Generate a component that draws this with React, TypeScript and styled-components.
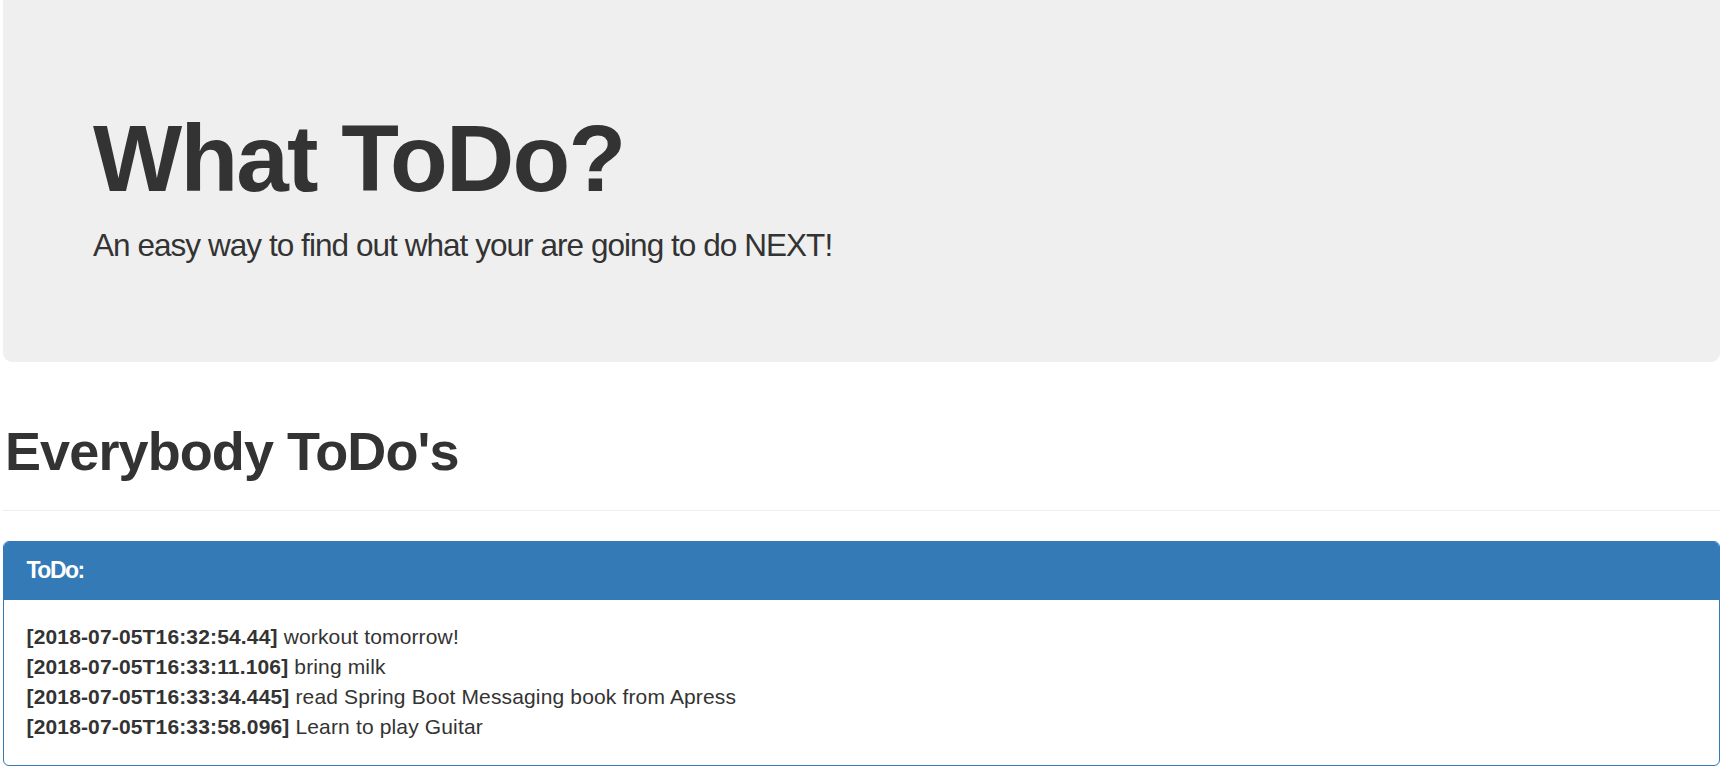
import { FC } from 'react'
import styled, { createGlobalStyle } from 'styled-components'

const GlobalStyle = createGlobalStyle`
  html, body {
    margin: 0;
    padding: 0;
    background: #fff;
  }
  body {
    font-family: 'Liberation Sans', Arial, Helvetica, sans-serif;
    font-size: 21px;
    line-height: 30px;
    color: #333;
  }
`

const Container = styled.div`
  padding: 0 5px 0 3px;
`

const Jumbotron = styled.header`
  background: #efefef;
  border-radius: 0 0 9px 9px;
  padding: 74px 90px 72px;
  margin-bottom: 45px;
`

const JumboTitle = styled.h1`
  margin: 33px 0 12px;
  font-size: 94.5px;
  line-height: 1.1;
  font-weight: 700;
  letter-spacing: -1.8px;
  color: #333;
`

const JumboLead = styled.p`
  margin: 0 0 22.5px;
  font-size: 31.5px;
  line-height: 45px;
  font-weight: 300;
  letter-spacing: -0.95px;
  color: #333;
`

const PageHeader = styled.div`
  margin: 60px 0 30px;
  padding-bottom: 13.5px;
  border-bottom: 1px solid #eee;
`

const SectionTitle = styled.h1`
  margin: 0 0 15px;
  padding-left: 2px;
  font-size: 54px;
  line-height: 1.1;
  font-weight: 700;
  letter-spacing: -0.9px;
  color: #333;
`

const Panel = styled.section`
  border: 1px solid #337ab7;
  border-radius: 6px;
  background: #fff;
  box-shadow: 0 1px 1px rgba(0, 0, 0, 0.05);
  overflow: hidden;
`

const PanelHeading = styled.div`
  background: #337ab7;
  color: #fff;
  padding: 15px 22.5px;
  border-bottom: 1px solid #337ab7;
`

const PanelTitle = styled.h3`
  margin: 0;
  font-size: 23px;
  line-height: 26.4px;
  font-weight: 700;
  letter-spacing: -1.5px;
`

const PanelBody = styled.div`
  padding: 22.5px;
`

const TodoList = styled.ul`
  list-style: none;
  margin: 0;
  padding: 0;
`

const TodoItem = styled.li`
  font-size: 21px;
  line-height: 30px;
  letter-spacing: 0.15px;
`

const Stamp = styled.b`
  font-weight: 700;
`

interface ITodo {
  created: string
  text: string
}

const todos: ITodo[] = [
  { created: '2018-07-05T16:32:54.44', text: 'workout tomorrow!' },
  { created: '2018-07-05T16:33:11.106', text: 'bring milk' },
  { created: '2018-07-05T16:33:34.445', text: 'read Spring Boot Messaging book from Apress' },
  { created: '2018-07-05T16:33:58.096', text: 'Learn to play Guitar' },
]

const App: FC = () => {
  return (
    <>
      <GlobalStyle />
      <Container>
        <Jumbotron>
          <JumboTitle>What ToDo?</JumboTitle>
          <JumboLead>An easy way to find out what your are going to do NEXT!</JumboLead>
        </Jumbotron>

        <PageHeader>
          <SectionTitle>Everybody ToDo's</SectionTitle>
        </PageHeader>

        <Panel>
          <PanelHeading>
            <PanelTitle>ToDo:</PanelTitle>
          </PanelHeading>
          <PanelBody>
            <TodoList>
              {todos.map(item => (
                <TodoItem key={item.created}>
                  <Stamp>[{item.created}]</Stamp> {item.text}
                </TodoItem>
              ))}
            </TodoList>
          </PanelBody>
        </Panel>
      </Container>
    </>
  )
}

export default App
